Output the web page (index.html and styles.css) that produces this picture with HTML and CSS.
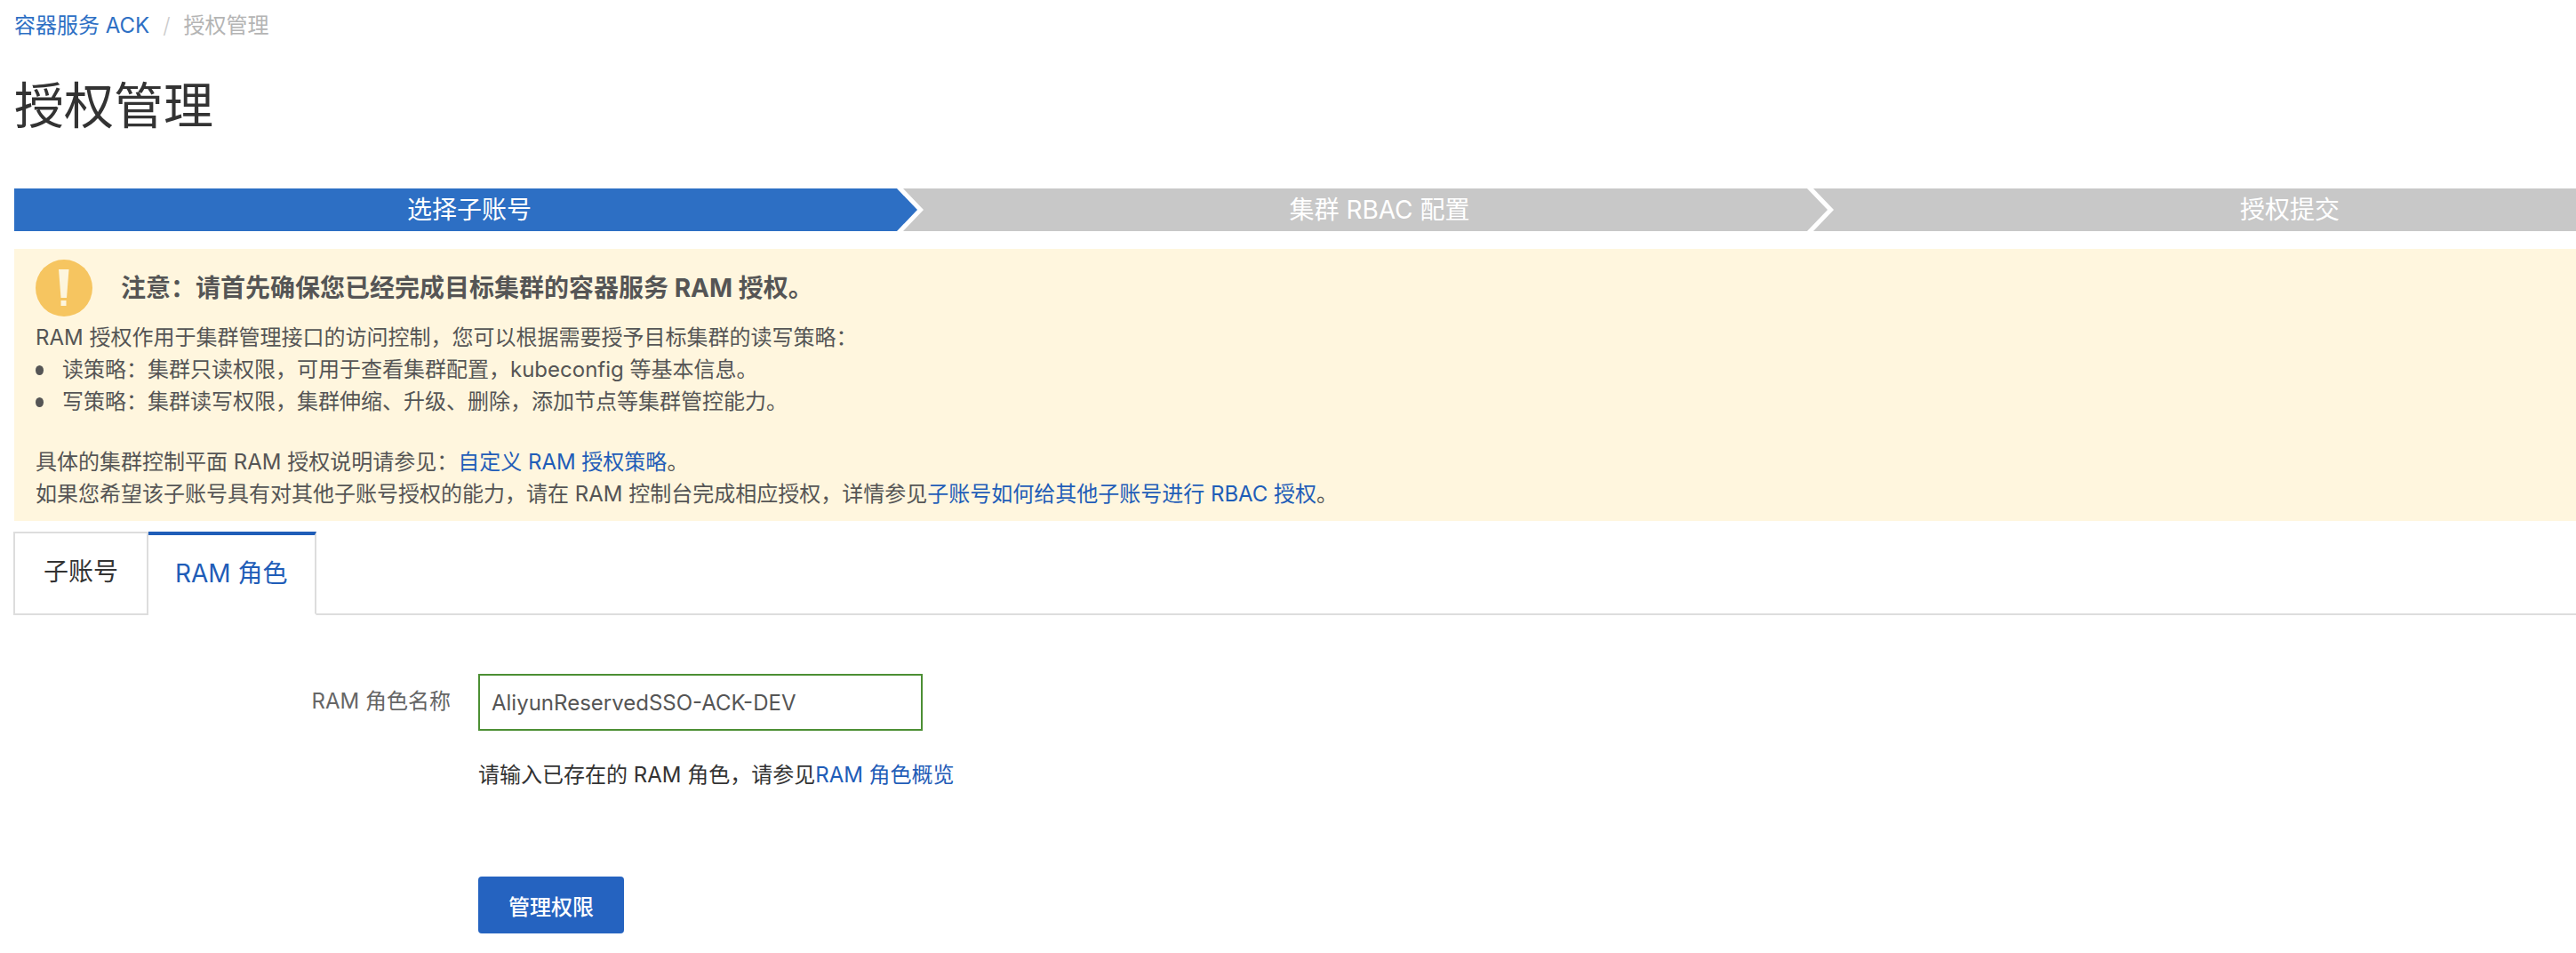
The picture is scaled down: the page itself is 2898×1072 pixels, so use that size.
FILE: index.html
```html
<!DOCTYPE html>
<html lang="zh-CN">
<head>
  <meta charset="UTF-8" />
  <title>授权管理</title>
  <link rel="stylesheet" href="styles.css">
</head>
<body>
  <nav class="breadcrumb">
    <a href="#">容器服务 ACK</a>
    <span class="breadcrumb-sep">/</span>
    <span class="breadcrumb-current">授权管理</span>
  </nav>

  <h1 class="page-title">授权管理</h1>

  <div class="steps">
    <div class="step step-first is-active">选择子账号</div>
    <div class="step">集群 RBAC 配置</div>
    <div class="step">授权提交</div>
  </div>

  <section class="notice">
    <div class="notice-head">
      <svg class="notice-icon" viewBox="0 0 64 64" width="64" height="64" aria-hidden="true">
        <circle cx="32" cy="32" r="32" fill="#f6c560" />
        <path d="M26 11h11.500l-2.500 32h-6.500z" fill="#fdf5dd" />
        <rect x="28.500" y="46" width="6" height="6" fill="#fdf5dd" />
      </svg>
      <strong>注意：请首先确保您已经完成目标集群的容器服务 RAM 授权。</strong>
    </div>
    <p>RAM 授权作用于集群管理接口的访问控制，您可以根据需要授予目标集群的读写策略：</p>
    <ul>
      <li>读策略：集群只读权限，可用于查看集群配置，kubeconfig 等基本信息。</li>
      <li>写策略：集群读写权限，集群伸缩、升级、删除，添加节点等集群管控能力。</li>
    </ul>
    <p class="notice-gap">具体的集群控制平面 RAM 授权说明请参见：<a href="#">自定义 RAM 授权策略</a>。</p>
    <p>如果您希望该子账号具有对其他子账号授权的能力，请在 RAM 控制台完成相应授权，详情参见<a href="#">子账号如何给其他子账号进行 RBAC 授权</a>。</p>
  </section>

  <div class="tabs">
    <a class="tab" href="#">子账号</a>
    <a class="tab is-active" href="#">RAM 角色</a>
  </div>

  <form class="role-form">
    <label class="role-label" for="role">RAM 角色名称</label>
    <input class="role-input" id="role" type="text" value="AliyunReservedSSO-ACK-DEV" />
    <p class="role-hint">请输入已存在的 RAM 角色，请参见<a href="#">RAM 角色概览</a></p>
    <button class="btn-primary" type="button">管理权限</button>
  </form>
</body>
</html>
```

FILE: styles.css
```css
:root {
  --blue: #2d6fc4;
  --link: #1f5db8;
  --grey: #c8c8c8;
  --line: #dddddd;
  --text: #333333;
  --text-soft: #555555;
  --font-family: Inter, "Noto Sans CJK SC", sans-serif;
}

* { box-sizing: border-box; margin: 0; padding: 0; }

html, body { overflow: hidden; }

body {
  height: 1072px;
  padding-left: 16px;
  background: #ffffff;
  color: var(--text);
  font-family: var(--font-family);
  font-size: 24px;
  line-height: 36px;
}

a { color: var(--link); text-decoration: none; }

.breadcrumb {
  display: flex;
  gap: 15px;
  padding-top: 11px;
}
.breadcrumb a { color: var(--blue); }
.breadcrumb-sep { color: #cccccc; font-weight: 300; }
.breadcrumb-current { color: #b4b4b4; }

.page-title {
  margin-top: 36px;
  margin-bottom: 57px;
  font-size: 56px;
  font-weight: 400;
  line-height: 72px;
}

.steps {
  display: flex;
  width: 3072px;
}

/* each step reaches back under the previous arrow, so the white gap stays even */
.step {
  flex: 0 0 1048px;
  height: 48px;
  margin-left: -24px;
  padding-left: 24px;
  background: var(--grey);
  color: #ffffff;
  font-size: 28px;
  line-height: 48px;
  text-align: center;
  clip-path: polygon(0 0, calc(100% - 31px) 0, calc(100% - 8px) 50%, calc(100% - 31px) 100%, 0 100%, 23px 50%);
}
.step-first {
  flex-basis: 1024px;
  margin-left: 0;
  padding-left: 0;
  clip-path: polygon(0 0, calc(100% - 31px) 0, calc(100% - 8px) 50%, calc(100% - 31px) 100%, 0 100%);
}
.step.is-active { background: var(--blue); }

.notice {
  height: 306px;
  margin-top: 20px;
  padding: 12px 24px;
  background: #fff6de;
  color: var(--text-soft);
}
.notice-head {
  display: flex;
  align-items: center;
  gap: 32px;
  height: 64px;
  margin-bottom: 6px;
  font-size: 28px;
}
.notice-icon { flex: none; }
.notice ul { list-style: none; }
.notice li {
  display: flex;
  align-items: center;
  gap: 21px;
}
.notice li::before {
  content: "";
  width: 9px;
  height: 11px;
  border-radius: 50%;
  background: var(--text-soft);
}
.notice-gap { margin-top: 32px; }

.tabs {
  display: flex;
  margin-top: 12px;
  border-bottom: 2px solid var(--line);
}
.tab {
  height: 94px;
  margin-bottom: -2px;
  padding: 0 32px;
  border: 2px solid var(--line);
  background: #ffffff;
  color: var(--text);
  font-size: 28px;
  line-height: 86px;
}
.tab:first-child { margin-left: -1px; }
.tab + .tab { border-left: 0; }
.tab.is-active {
  padding: 0 30px;
  border-top: 4px solid var(--link);
  border-bottom-color: #ffffff;
  color: var(--link);
}

.role-form {
  display: grid;
  grid-template-columns: 491px 1fr;
  column-gap: 31px;
  margin-top: 66px;
}
.role-label {
  color: #666666;
  line-height: 62px;
  text-align: right;
}
.role-input {
  width: 500px;
  height: 64px;
  padding: 0 13px;
  border: 2px solid #4c8f34;
  outline: none;
  color: var(--text-soft);
  font-family: var(--font-family);
  font-size: 24px;
}
.role-hint {
  grid-column: 2;
  margin-top: 32px;
}
.btn-primary {
  grid-column: 2;
  width: 164px;
  height: 64px;
  margin-top: 96px;
  border: none;
  border-radius: 4px;
  background: #2563c0;
  color: #ffffff;
  font-family: var(--font-family);
  font-size: 24px;
  font-weight: 500;
}
```
